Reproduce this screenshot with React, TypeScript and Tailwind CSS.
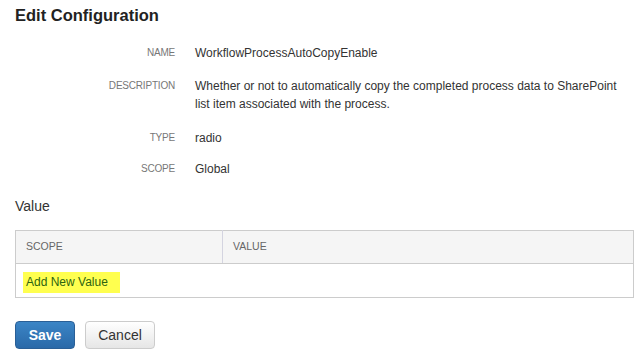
const fields = [
  { label: "NAME", value: "WorkflowProcessAutoCopyEnable", gap: "mt-0" },
  {
    label: "DESCRIPTION",
    value:
      "Whether or not to automatically copy the completed process data to SharePoint list item associated with the process.",
    gap: "mt-[15px]",
  },
  { label: "TYPE", value: "radio", gap: "mt-[16px]" },
  { label: "SCOPE", value: "Global", gap: "mt-[13px]" },
];

export default function App() {
  return (
    <div
      className="w-[642px] h-[361px] bg-white text-[#333] px-[15px] pt-[4px]"
      style={{ fontFamily: '"Liberation Sans", Arial, sans-serif' }}
    >
      <h1 className="text-[16.5px] leading-[22px] font-bold text-[#222]">Edit Configuration</h1>

      <dl className="mt-[18px] flex flex-col">
        {fields.map((f) => (
          <div key={f.label} className={`flex gap-[20px] ${f.gap}`}>
            <dt className="w-[160px] shrink-0 text-right text-[10px] tracking-[-0.2px] leading-[18px] text-[#777]">
              {f.label}
            </dt>
            <dd className="text-[12px] leading-[18px]">{f.value}</dd>
          </div>
        ))}
      </dl>

      <h2 className="mt-[19px] text-[14px] leading-[18px]">Value</h2>

      <table className="mt-[15px] w-[619px] border-collapse border border-[#ccc]">
        <thead>
          <tr className="bg-[#f5f5f5] h-[33px]">
            <th className="w-[207px] border-r border-[#d4d4e0] border-b border-b-[#ccc] px-[10px] text-left text-[10.5px] font-normal text-[#666]">
              SCOPE
            </th>
            <th className="border-b border-[#ccc] px-[10px] text-left text-[10.5px] font-normal text-[#666]">
              VALUE
            </th>
          </tr>
        </thead>
        <tbody>
          <tr className="h-[34px]">
            <td colSpan={2} className="px-[7px]">
              <a className="inline-block bg-[#ffff4f] pl-[3px] pr-[12px] text-[12px] leading-[21px] text-[#2d6410]">
                Add New Value
              </a>
            </td>
          </tr>
        </tbody>
      </table>

      <div className="mt-[23px] flex gap-[10px]">
        <button
          type="button"
          className="w-[60px] h-[28px] rounded-[4px] border border-[#2a5f96] bg-linear-to-b from-[#3b85c6] to-[#2a69a8] text-white font-bold text-[14px]"
        >
          Save
        </button>
        <button
          type="button"
          className="w-[70px] h-[28px] rounded-[4px] border border-[#ccc] bg-linear-to-b from-white to-[#e6e6e6] text-[#333] text-[14px]"
        >
          Cancel
        </button>
      </div>
    </div>
  );
}
